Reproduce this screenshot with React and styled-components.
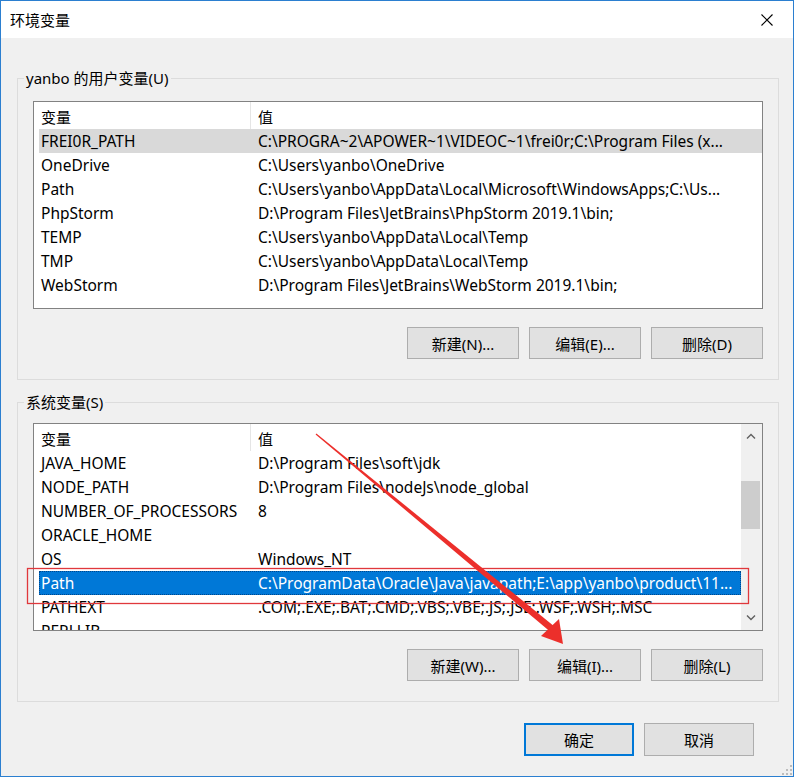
import React from "react";
import styled, { createGlobalStyle } from "styled-components";

const GlobalStyle = createGlobalStyle`
  html, body {
    margin: 0;
    padding: 0;
    background: #ffffff;
  }
  body {
    font-family: "Noto Sans", "Noto Sans CJK SC", sans-serif;
    font-size: 15px;
    color: #000;
  }
  * {
    box-sizing: border-box;
  }
`;

const userVars = [
  ["FREI0R_PATH", "C:\\PROGRA~2\\APOWER~1\\VIDEOC~1\\frei0r;C:\\Program Files (x..."],
  ["OneDrive", "C:\\Users\\yanbo\\OneDrive"],
  ["Path", "C:\\Users\\yanbo\\AppData\\Local\\Microsoft\\WindowsApps;C:\\Us..."],
  ["PhpStorm", "D:\\Program Files\\JetBrains\\PhpStorm 2019.1\\bin;"],
  ["TEMP", "C:\\Users\\yanbo\\AppData\\Local\\Temp"],
  ["TMP", "C:\\Users\\yanbo\\AppData\\Local\\Temp"],
  ["WebStorm", "D:\\Program Files\\JetBrains\\WebStorm 2019.1\\bin;"],
];

const systemVars = [
  ["JAVA_HOME", "D:\\Program Files\\soft\\jdk"],
  ["NODE_PATH", "D:\\Program Files\\nodeJs\\node_global"],
  ["NUMBER_OF_PROCESSORS", "8"],
  ["ORACLE_HOME", ""],
  ["OS", "Windows_NT"],
  ["Path", "C:\\ProgramData\\Oracle\\Java\\javapath;E:\\app\\yanbo\\product\\11..."],
  ["PATHEXT", ".COM;.EXE;.BAT;.CMD;.VBS;.VBE;.JS;.JSE;.WSF;.WSH;.MSC"],
  ["PERLLIB", ""],
];

const App = () => {
  return (
    <>
      <GlobalStyle />
      <Window>
        <TitleBar>
          <Title>环境变量</Title>
          <CloseButton>
            <svg width="12" height="12" viewBox="0 0 12 12">
              <path d="M0.5 0.5 L11.5 11.5 M11.5 0.5 L0.5 11.5" stroke="#000" strokeWidth="1.1" fill="none" />
            </svg>
          </CloseButton>
        </TitleBar>

        <Body>
          <Group $top={13}>
            <Legend>yanbo 的用户变量(U)</Legend>
            <VarList rows={userVars} selected={0} focused={false} />
            <ButtonRow>
              <Button>新建(N)...</Button>
              <Button>编辑(E)...</Button>
              <Button>删除(D)</Button>
            </ButtonRow>
          </Group>

          <Group $top={11} $gap={12}>
            <Legend>系统变量(S)</Legend>
            <VarList rows={systemVars} selected={5} focused scroll />
            <ButtonRow>
              <Button>新建(W)...</Button>
              <Button>编辑(I)...</Button>
              <Button>删除(L)</Button>
            </ButtonRow>
          </Group>

          <Footer>
            <DialogButton $default>确定</DialogButton>
            <DialogButton>取消</DialogButton>
          </Footer>
        </Body>

        <Annotation width="794" height="777" viewBox="0 0 794 777">
          <rect x="27.5" y="568.5" width="721" height="35" fill="none" stroke="#e0383c" strokeWidth="1.3" />
          <polygon
            points="315.6,434.5 316.4,433.5 553.2,625.4 548.8,630.6"
            fill="#ec2f2b"
          />
          <polygon points="563,644 541,636 559,619" fill="#ec2f2b" />
        </Annotation>

        <Grip width="14" height="14" viewBox="0 0 14 14">
          {[
            [11, 3],
            [11, 7],
            [7, 7],
            [11, 11],
            [7, 11],
            [3, 11],
          ].map(([x, y]) => (
            <rect key={`${x}-${y}`} x={x} y={y} width="2" height="2" fill="#bcbcbc" />
          ))}
        </Grip>
      </Window>
    </>
  );
};

const VarList = ({ rows, selected, focused, scroll }) => (
  <ListBox>
    <Table>
      <HeaderRow>
        <HeadCell $first>变量</HeadCell>
        <HeadCell>值</HeadCell>
      </HeaderRow>
      {rows.map(([name, value], i) => (
        <Row key={name} $state={i === selected ? (focused ? "active" : "inactive") : null}>
          <NameCell>{name}</NameCell>
          <ValueCell>{value}</ValueCell>
        </Row>
      ))}
    </Table>
    {scroll && (
      <ScrollBar>
        <ScrollArrow>
          <svg width="10" height="6" viewBox="0 0 10 6">
            <path d="M1 5.5 L5 1.5 L9 5.5" stroke="#606060" strokeWidth="1.4" fill="none" />
          </svg>
        </ScrollArrow>
        <Track>
          <Thumb />
        </Track>
        <ScrollArrow>
          <svg width="10" height="6" viewBox="0 0 10 6">
            <path d="M1 0.5 L5 4.5 L9 0.5" stroke="#606060" strokeWidth="1.4" fill="none" />
          </svg>
        </ScrollArrow>
      </ScrollBar>
    )}
  </ListBox>
);

export default App;

const Window = styled.div`
  position: relative;
  width: 794px;
  height: 777px;
  border: 1px solid #2b7fd0;
  background: #f0f0f0;
  display: flex;
  flex-direction: column;
  overflow: hidden;
`;

const TitleBar = styled.div`
  height: 37px;
  background: #ffffff;
  display: flex;
  align-items: center;
  justify-content: space-between;
  padding-left: 9px;
  flex-shrink: 0;
`;

const Title = styled.span`
  font-size: 15px;
  line-height: 20px;
`;

const CloseButton = styled.div`
  width: 46px;
  height: 37px;
  display: flex;
  align-items: center;
  justify-content: center;
  margin-right: 3px;
`;

const Body = styled.div`
  flex: 1;
  display: flex;
  flex-direction: column;
  padding: 30px 14px 0 16px;
`;

const Group = styled.fieldset`
  margin: ${(p) => p.$gap || 0}px 0 0 0;
  padding: ${(p) => p.$top}px 15px 20px 15px;
  border: 1px solid #dcdcdc;
  min-width: 0;
`;

const Legend = styled.legend`
  padding: 0 2px;
  margin-left: -9px;
  line-height: 20px;
  font-size: 15px;
`;

const ListBox = styled.div`
  height: 208px;
  border: 1px solid #828282;
  background: #ffffff;
  display: flex;
  overflow: hidden;
`;

const Table = styled.div`
  flex: 1;
  padding-left: 5px;
  overflow: hidden;
`;

const HeaderRow = styled.div`
  display: grid;
  grid-template-columns: 212px 488px;
  height: 27px;
`;

const HeadCell = styled.div`
  display: flex;
  align-items: center;
  padding: 2px 0 0 ${(p) => (p.$first ? 2 : 7)}px;
  border-right: ${(p) => (p.$first ? "1px solid #e5e5e5" : "none")};
`;

const Row = styled.div`
  display: grid;
  grid-template-columns: 212px 488px;
  height: 24px;
  align-items: center;
  white-space: nowrap;
  font-size: 15.5px;
  background: ${(p) =>
    p.$state === "active" ? "#0078d7" : p.$state === "inactive" ? "#d9d9d9" : "transparent"};
  color: ${(p) => (p.$state === "active" ? "#ffffff" : "#000000")};
  outline: ${(p) => (p.$state === "active" ? "1px dotted rgba(0, 40, 90, 0.6)" : "none")};
  outline-offset: -1px;
`;

const NameCell = styled.div`
  padding-left: 2px;
  overflow: hidden;
`;

const ValueCell = styled.div`
  padding-left: 7px;
  overflow: hidden;
`;

const ScrollBar = styled.div`
  width: 21px;
  flex-shrink: 0;
  background: #f0f0f0;
  display: flex;
  flex-direction: column;
`;

const ScrollArrow = styled.div`
  height: 24px;
  display: flex;
  align-items: center;
  justify-content: center;
  padding-right: 1px;
`;

const Track = styled.div`
  flex: 1;
  padding-top: 33px;
`;

const Thumb = styled.div`
  width: 19px;
  height: 48px;
  background: #cdcdcd;
`;

const ButtonRow = styled.div`
  display: flex;
  justify-content: flex-end;
  gap: 10px;
  margin-top: 18px;
`;

const Button = styled.div`
  width: 112px;
  height: 32px;
  background: #e1e1e1;
  border: 1px solid #adadad;
  display: flex;
  align-items: center;
  justify-content: center;
  font-size: 15px;
`;

const Footer = styled.div`
  display: flex;
  justify-content: flex-end;
  gap: 10px;
  margin-top: 21px;
  padding-right: 25px;
`;

const DialogButton = styled.div`
  width: 110px;
  height: 33px;
  background: #e1e1e1;
  border: ${(p) => (p.$default ? "2px solid #0078d7" : "1px solid #adadad")};
  display: flex;
  align-items: center;
  justify-content: center;
  font-size: 15px;
`;

const Annotation = styled.svg`
  position: absolute;
  top: -1px;
  left: -1px;
  pointer-events: none;
`;

const Grip = styled.svg`
  position: absolute;
  right: 0;
  bottom: 0;
`;
